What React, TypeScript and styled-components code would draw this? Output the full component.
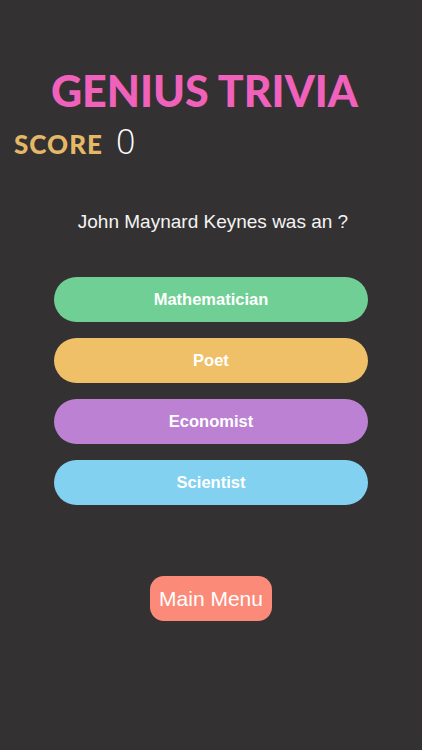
import React from "react";
import styled, { createGlobalStyle } from "styled-components";

const Global = createGlobalStyle`
  html, body { margin: 0; padding: 0; background: #333132; }
  body { font-family: "Liberation Sans", Arial, sans-serif; }
`;

const Screen = styled.div`
  width: 422px;
  height: 750px;
  background: #333132;
  display: flex;
  flex-direction: column;
  box-sizing: border-box;
  padding-top: 66px;
`;

const Title = styled.h1`
  margin: 0 0 0 -13px;
  text-align: center;
  font-family: "Lato", sans-serif;
  font-weight: 900;
  font-size: 43px;
  line-height: 50px;
  letter-spacing: 0;
  color: #f061bb;
`;

const ScoreRow = styled.div`
  display: flex;
  align-items: baseline;
  gap: 13px;
  padding-left: 14px;
  margin-top: 2px;
  height: 44px;
`;

const ScoreLabel = styled.span`
  font-family: "Lato", sans-serif;
  font-weight: 900;
  font-size: 26px;
  letter-spacing: 1px;
  color: #e4b866;
`;

const ScoreValue = styled.span`
  font-family: "Open Sans", sans-serif;
  font-weight: 300;
  font-size: 34px;
  color: #ffffff;
`;

const Question = styled.p`
  margin: 49px 0 0;
  text-align: center;
  padding-left: 4px;
  font-size: 19px;
  color: #f4f4f4;
`;

const Answers = styled.div`
  display: flex;
  flex-direction: column;
  gap: 16px;
  margin: 44px 0 0 54px;
  width: 314px;
`;

const Answer = styled.button<{ $bg: string }>`
  height: 45px;
  border: none;
  border-radius: 23px;
  background: ${(p) => p.$bg};
  color: #ffffff;
  font-family: "Liberation Sans", Arial, sans-serif;
  font-weight: 700;
  font-size: 16.5px;
  padding: 0;
`;

const Menu = styled.button`
  align-self: center;
  margin-top: 71px;
  width: 122px;
  height: 45px;
  border: none;
  border-radius: 14px;
  background: #fc8a79;
  color: #ffffff;
  font-family: "Liberation Sans", Arial, sans-serif;
  font-size: 21px;
  padding: 0;
`;

const answers = [
  { text: "Mathematician", bg: "#70cf94" },
  { text: "Poet", bg: "#efc068" },
  { text: "Economist", bg: "#bd81d3" },
  { text: "Scientist", bg: "#82d1f1" },
];

export default function App() {
  return (
    <>
      <Global />
      <Screen>
        <Title>GENIUS TRIVIA</Title>
        <ScoreRow>
          <ScoreLabel>SCORE</ScoreLabel>
          <ScoreValue>0</ScoreValue>
        </ScoreRow>
        <Question>John Maynard Keynes was an ?</Question>
        <Answers>
          {answers.map((a) => (
            <Answer key={a.text} $bg={a.bg}>
              {a.text}
            </Answer>
          ))}
        </Answers>
        <Menu>Main Menu</Menu>
      </Screen>
    </>
  );
}
